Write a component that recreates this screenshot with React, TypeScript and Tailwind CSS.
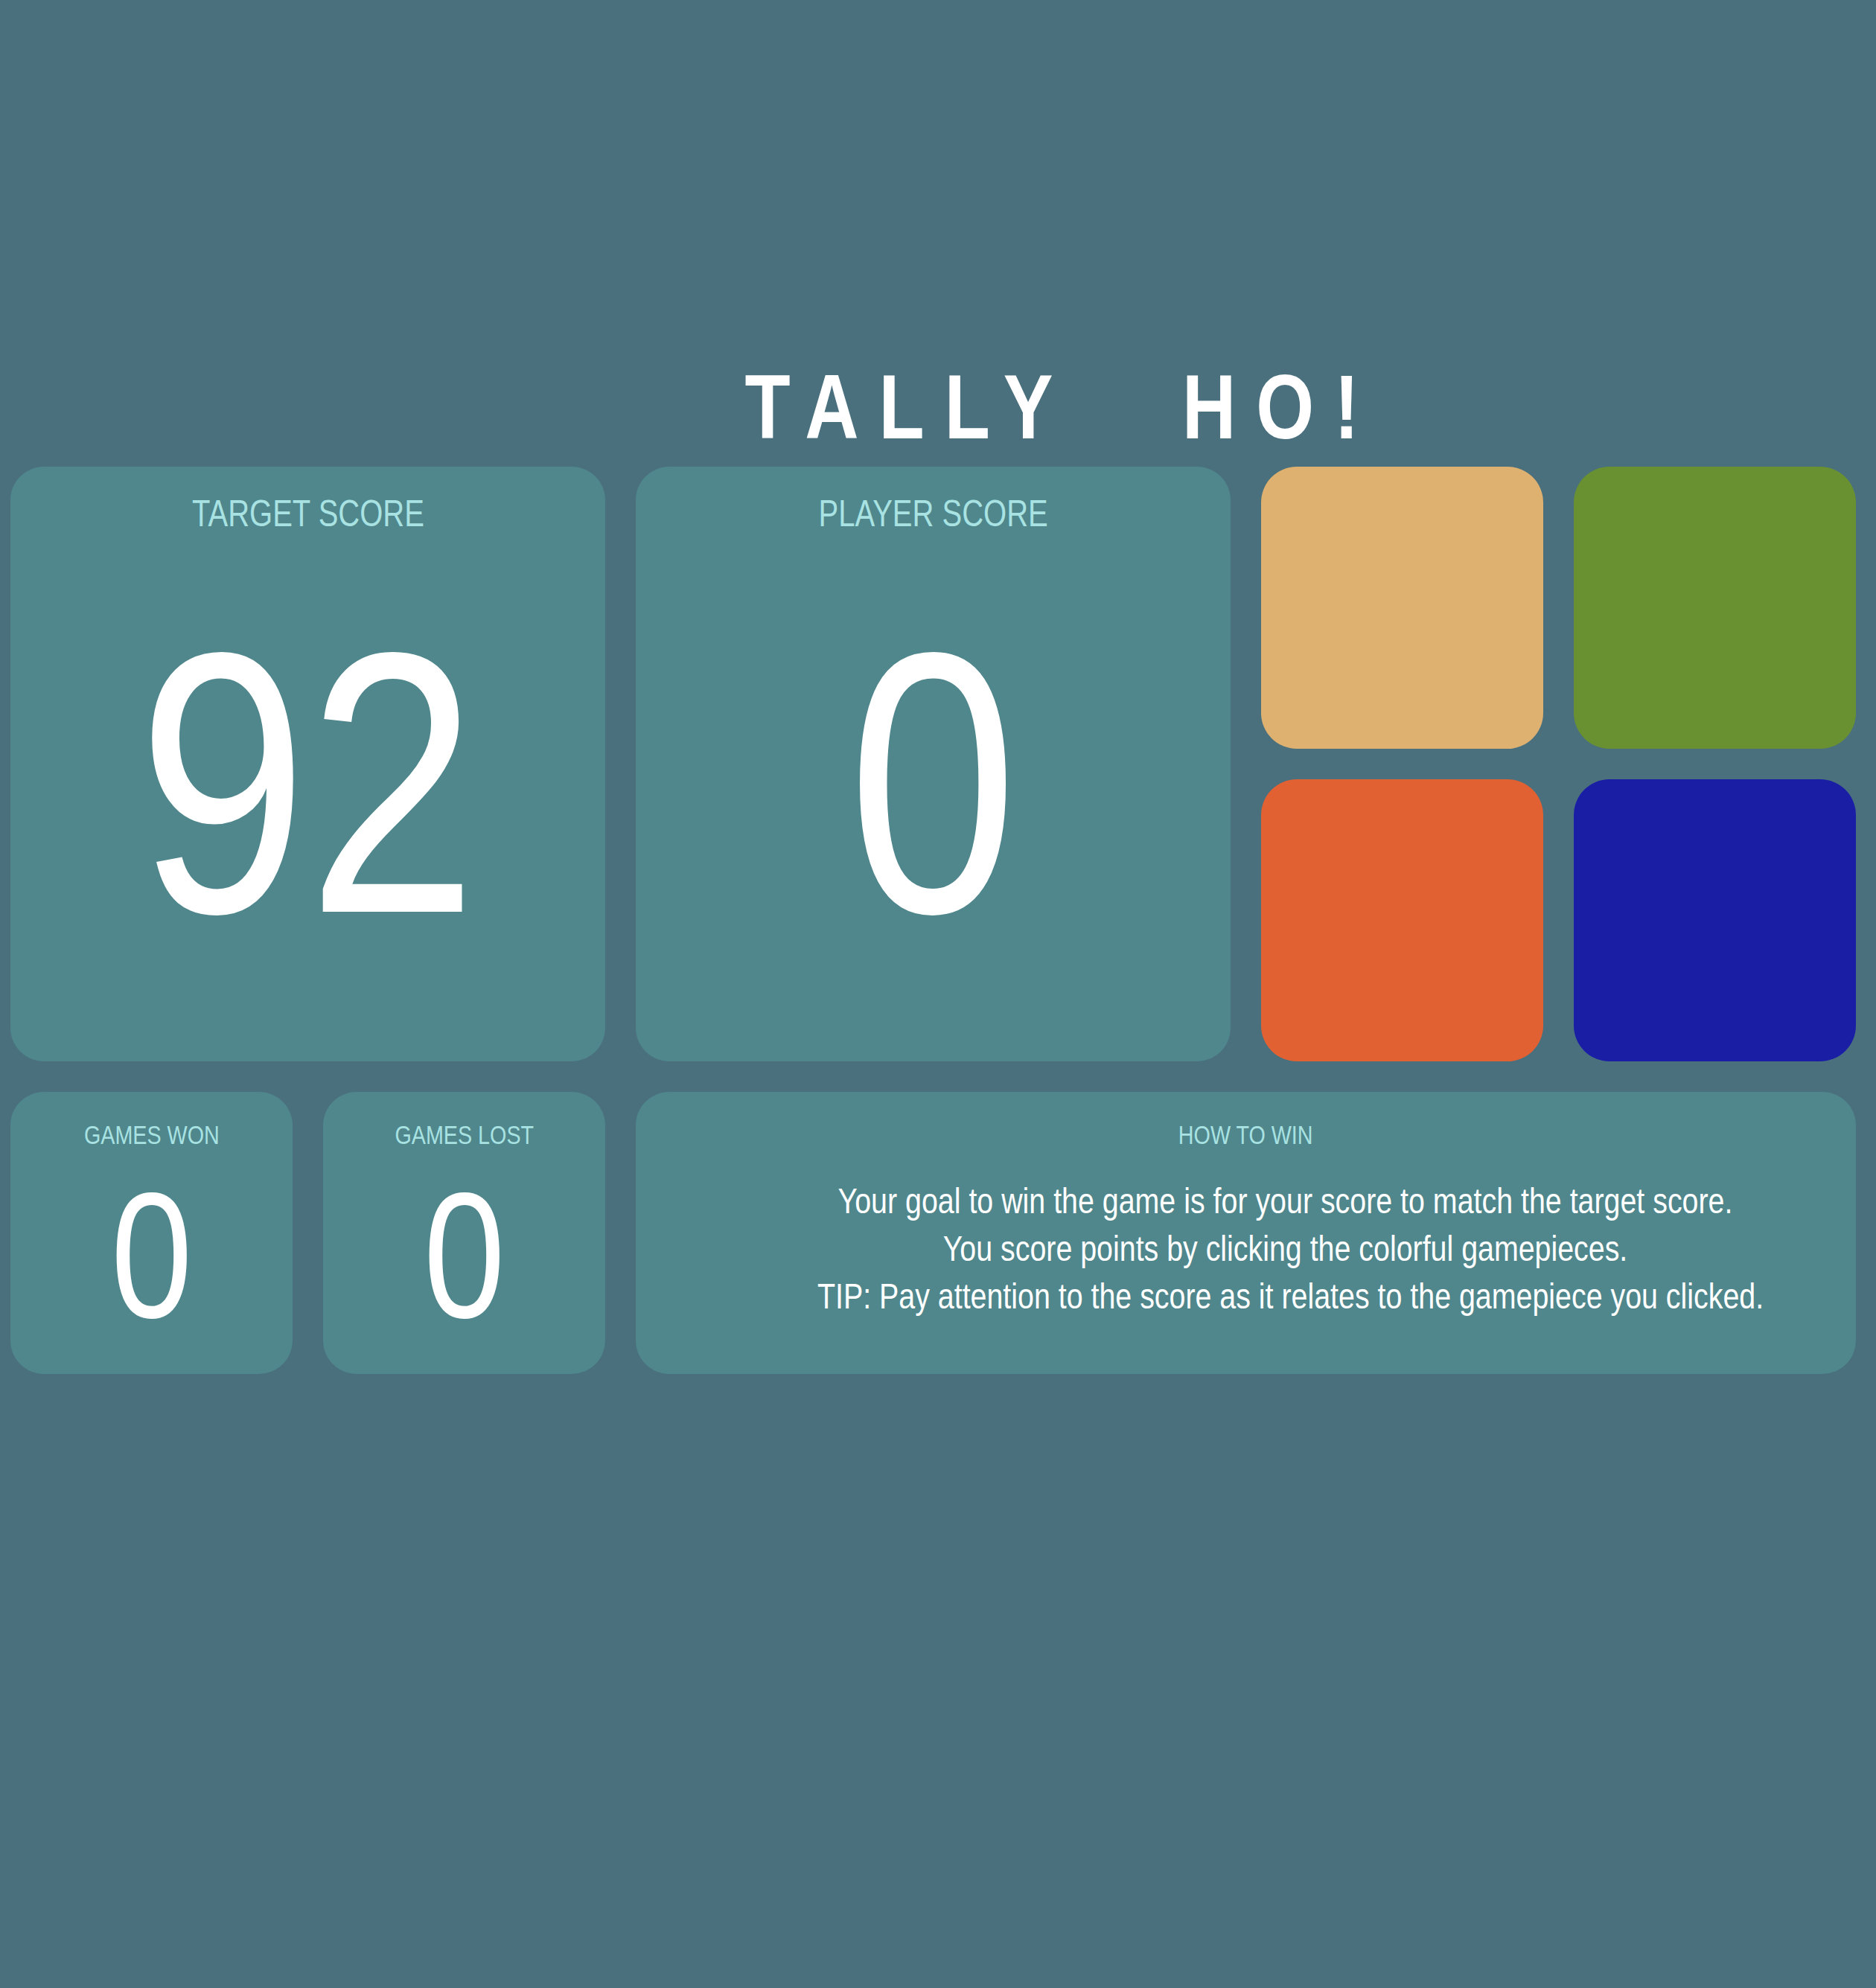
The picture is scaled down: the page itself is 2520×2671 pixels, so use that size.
const font = {
  fontFamily: '"Liberation Sans Narrow", "Arial Narrow", "Liberation Sans", Arial, sans-serif',
};

function Narrow({
  children,
  className = "",
  squeeze = "scale-x-[0.82]",
}: {
  children: React.ReactNode;
  className?: string;
  squeeze?: string;
}) {
  return <span className={`inline-block origin-center ${squeeze} ${className}`}>{children}</span>;
}

function ScoreCard({ label, value }: { label: string; value: number }) {
  return (
    <div className="col-span-2 row-span-2 rounded-[45px] bg-[#4f878c] pt-[38px] text-center">
      <div className="text-[50px] leading-none text-[#a8e2e2]">
        <Narrow squeeze="scale-x-[0.8]">{label}</Narrow>
      </div>
      <div className="mt-[87px] text-[500px] leading-none text-white">
        <Narrow>{value}</Narrow>
      </div>
    </div>
  );
}

function CountCard({ label, value }: { label: string; value: number }) {
  return (
    <div className="rounded-[45px] bg-[#4f878c] pt-[40px] text-center">
      <div className="text-[35px] leading-none text-[#a8e2e2]">
        <Narrow>{label}</Narrow>
      </div>
      <div className="mt-[25px] text-[240px] leading-none text-white">
        <Narrow>{value}</Narrow>
      </div>
    </div>
  );
}

const pieces = ["bg-[#deb170]", "bg-[#6a9131]", "bg-[#e26133]", "bg-[#1a1ea5]"];

export default function App() {
  return (
    <div className="min-h-screen bg-[#4a707e] pt-[486px]" style={font}>
      <h1 className="pl-[334px] text-center text-[122px] font-bold leading-none text-white">
        <Narrow className="tracking-[33px] whitespace-pre [word-spacing:114px]">TALLY HO!</Narrow>
      </h1>
      <div className="ml-[14px] mt-[19px] grid w-[2479px] grid-cols-6 auto-rows-[379px] gap-[41px]">
        <ScoreCard label="TARGET SCORE" value={92} />
        <ScoreCard label="PLAYER SCORE" value={0} />
        {pieces.map((bg) => (
          <button key={bg} className={`rounded-[48px] ${bg}`} />
        ))}
        <CountCard label="GAMES WON" value={0} />
        <CountCard label="GAMES LOST" value={0} />
        <div className="col-span-4 rounded-[45px] bg-[#4f878c] pt-[40px] text-center">
          <div className="text-[35px] leading-none text-[#a8e2e2]">
            <Narrow>HOW TO WIN</Narrow>
          </div>
          <div className="ml-[106px] mt-[40px] origin-center scale-x-[0.82] whitespace-nowrap text-[48px] leading-[64px] text-white">
            <p>Your goal to win the game is for your score to match the target score.</p>
            <p>You score points by clicking the colorful gamepieces.</p>
            <p>TIP: Pay attention to the score as it relates to the gamepiece you clicked.</p>
          </div>
        </div>
      </div>
    </div>
  );
}
